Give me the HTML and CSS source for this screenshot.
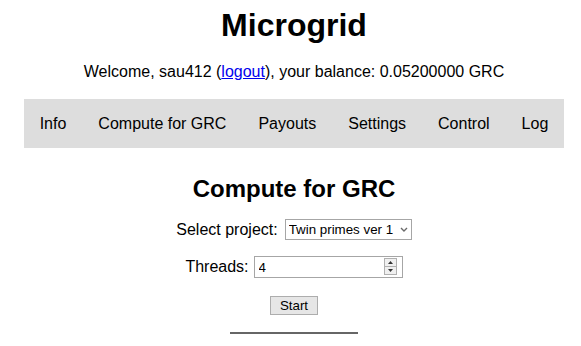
FILE: index.html
```html
<!DOCTYPE html>
<html>
<head>
<meta charset="utf-8">
<title>Microgrid</title>
<link rel="stylesheet" href="styles.css">
</head>
<body>
<h1 class="title">Microgrid</h1>
<p class="welcome">Welcome, sau412 (<a class="link" href="#">logout</a>), your balance: 0.05200000 GRC</p>
<nav class="menu">
  <a class="menu-item" href="#">Info</a>
  <a class="menu-item" href="#">Compute for GRC</a>
  <a class="menu-item" href="#">Payouts</a>
  <a class="menu-item" href="#">Settings</a>
  <a class="menu-item" href="#">Control</a>
  <a class="menu-item" href="#">Log</a>
</nav>
<main class="compute">
  <h2 class="section-title">Compute for GRC</h2>
  <form class="compute-form">
    <div class="row row-project">
      <label class="label" for="project">Select project:</label>
      <span class="select-wrap">
        <select class="select" id="project"><option>Twin primes ver 1</option></select>
        <svg class="chevron" width="8" height="5" viewBox="0 0 8 5"><path d="M1 1 L4 4 L7 1" fill="none" stroke="#6a6a6a" stroke-width="1.4"/></svg>
      </span>
    </div>
    <div class="row row-threads">
      <label class="label" for="threads">Threads:</label>
      <span class="num-wrap">
        <input class="num" id="threads" type="text" value="4">
        <svg class="spin" width="13" height="17" viewBox="0 0 13 17">
          <rect x="0.5" y="0.5" width="12" height="16" fill="#f0f0f0" stroke="#b0b0b0"/>
          <line x1="0.5" y1="8.5" x2="12.5" y2="8.5" stroke="#b0b0b0"/>
          <path d="M4 6 L6.5 3 L9 6 Z" fill="#333"/>
          <path d="M4 11 L6.5 14 L9 11 Z" fill="#333"/>
        </svg>
      </span>
    </div>
    <div class="row row-start">
      <button class="btn" type="button">Start</button>
    </div>
  </form>
  <hr class="rule">
</main>
</body>
</html>
```
FILE: styles.css
```css
body {
  margin: 7px 8px 8px 15px;
  font-family: "Liberation Sans", Arial, sans-serif;
  color: #000;
  background: #fff;
}
.title {
  margin: 0;
  font-size: 32px;
  line-height: 37px;
  font-weight: bold;
  text-align: center;
}
.welcome {
  margin: 19px 0 0;
  font-size: 16px;
  line-height: 18px;
  text-align: center;
}
.link {
  color: #0000ee;
  text-decoration: underline;
}
.menu {
  display: flex;
  width: max-content;
  margin: 18px auto 0;
  background: #dddddd;
}
.menu-item {
  padding: 15px 16px;
  font-size: 16px;
  line-height: 19px;
  color: #000;
  text-decoration: none;
}
.compute {
  display: flex;
  flex-direction: column;
  align-items: center;
}
.section-title {
  margin: 27px 0 0;
  font-size: 24px;
  line-height: 28px;
  font-weight: bold;
}
.compute-form {
  display: flex;
  flex-direction: column;
  align-items: center;
}
.row {
  display: flex;
  align-items: center;
  gap: 5px;
  font-size: 16px;
  line-height: 18px;
}
.row-project { margin-top: 16px; gap: 7px; }
.row-threads { margin-top: 16px; }
.row-start { margin-top: 18px; }
.select-wrap, .num-wrap {
  position: relative;
  display: block;
}
.select {
  -webkit-appearance: none;
  appearance: none;
  display: block;
  box-sizing: border-box;
  width: 127px;
  height: 21px;
  margin: 0;
  padding: 0 0 0 3px;
  border: 1px solid #a6a6a6;
  border-radius: 0;
  background: #fff;
  color: #000;
  font-family: "Liberation Sans", Arial, sans-serif;
  font-size: 13.33px;
}
.chevron {
  position: absolute;
  right: 4px;
  top: 8px;
  pointer-events: none;
}
.num {
  display: block;
  box-sizing: border-box;
  width: 149px;
  height: 22px;
  margin: 0;
  padding: 0 0 0 4px;
  border: 1px solid #a6a6a6;
  border-radius: 0;
  background: #fff;
  color: #000;
  font-family: "Liberation Sans", Arial, sans-serif;
  font-size: 13.33px;
  outline: none;
}
.spin {
  position: absolute;
  right: 6px;
  top: 2px;
  pointer-events: none;
}
.btn {
  display: block;
  box-sizing: border-box;
  height: 19px;
  margin: 0;
  padding: 0 9px;
  border: 1px solid #adadad;
  border-radius: 0;
  background: #e6e6e6;
  color: #000;
  font-family: "Liberation Sans", Arial, sans-serif;
  font-size: 13.33px;
  line-height: 17px;
}
.rule {
  width: 128px;
  height: 2px;
  margin: 17px 0 0;
  border: none;
  background: #666;
}
```
